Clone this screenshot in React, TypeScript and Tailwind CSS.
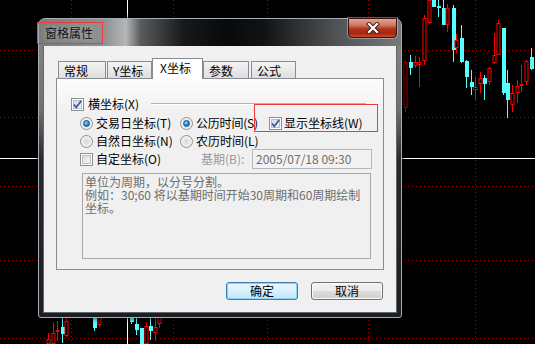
import React from "react";

type Candle = [number, number, number, number, number, "r" | "c" | "d"];

// x, wick top, wick bottom, body top, body bottom, colour
const candles: Candle[] = [
  [405, 60, 112, 62, 108, "d"],
  [410, 55, 75, 62, 68, "c"],
  [415, 56, 68, 62, 66, "r"],
  [419, 57, 87, 62, 65, "r"],
  [424, 15, 65, 18, 61, "r"],
  [429, 0, 24, 0, 23, "r"],
  [433, 0, 7, 0, 7, "c"],
  [438, 0, 17, 6, 8, "c"],
  [443, 0, 25, 8, 25, "c"],
  [447, 4, 32, 8, 25, "r"],
  [453, 5, 62, 8, 50, "c"],
  [456, 34, 53, 40, 48, "r"],
  [461, 25, 63, 38, 62, "c"],
  [466, 60, 88, 61, 77, "c"],
  [471, 70, 95, 82, 87, "c"],
  [475, 77, 100, 87, 90, "r"],
  [480, 72, 93, 78, 84, "r"],
  [484, 75, 100, 78, 84, "c"],
  [489, 67, 85, 68, 82, "r"],
  [494, 33, 64, 55, 63, "r"],
  [498, 20, 55, 23, 55, "r"],
  [503, 28, 95, 28, 93, "c"],
  [507, 70, 118, 83, 100, "c"],
  [512, 85, 112, 93, 105, "r"],
  [517, 80, 103, 86, 93, "r"],
  [521, 65, 92, 84, 85, "r"],
  [526, 60, 85, 61, 82, "r"],
  [531, 48, 70, 57, 69, "c"],
  [48, 333, 344, 339, 344, "r"],
  [53, 322, 344, 333, 344, "r"],
  [57, 321, 341, 330, 332, "r"],
  [62, 310, 343, 327, 334, "c"],
  [66, 310, 337, 321, 336, "r"],
  [94, 310, 331, 312, 328, "c"],
  [99, 310, 327, 312, 325, "r"],
  [131, 310, 324, 312, 322, "c"],
  [136, 310, 335, 324, 330, "c"],
  [141, 328, 344, 328, 344, "c"],
  [146, 322, 344, 326, 344, "r"],
  [150, 310, 340, 326, 331, "c"],
  [155, 310, 341, 327, 333, "r"],
  [159, 310, 328, 312, 324, "r"],
];

const gridY = [50, 117, 186, 260, 338];
const gridX = [71, 173, 267, 368, 475];

const Chart = () => (
  <svg className="absolute inset-0" width={535} height={344}>
    {gridY.map((y) => (
      <line key={`gy${y}`} x1={0} y1={y + 0.5} x2={535} y2={y + 0.5} stroke="#a00000" strokeDasharray="1 3" />
    ))}
    {gridX.map((x) => (
      <line key={`gx${x}`} x1={x + 0.5} y1={0} x2={x + 0.5} y2={344} stroke="#a00000" strokeDasharray="1 3" />
    ))}
    <line x1={127.5} y1={0} x2={127.5} y2={344} stroke="#ffffff" />
    <line x1={0} y1={158.5} x2={535} y2={158.5} stroke="#ffffff" />
    {candles.map(([x, wt, wb, bt, bb, c], i) => {
      const col = c === "c" ? "#55ffff" : c === "d" ? "#a00000" : "#ff0000";
      return (
        <g key={`c${i}`}>
          <line x1={x + 0.5} y1={wt} x2={x + 0.5} y2={wb} stroke={col} />
          {c === "c" ? (
            <rect x={x - 1} y={bt} width={4} height={Math.max(bb - bt, 1)} fill={col} />
          ) : (
            <rect x={x - 1} y={bt + 0.5} width={3} height={Math.max(bb - bt - 1, 1)} fill="#000" stroke={col} />
          )}
        </g>
      );
    })}
  </svg>
);

const Checkbox = ({ checked }: { checked?: boolean }) => (
  <span className="relative flex h-[13px] w-[13px] shrink-0 items-center justify-center border border-[#8e8f8f] bg-white">
    <span className="h-[9px] w-[9px] border border-[#b9bdc2] bg-linear-to-br from-[#d8dbe0] to-[#f7f7f7]" />
    {checked && (
      <svg className="absolute left-0 top-0" width={11} height={11} viewBox="0 0 11 11">
        <path d="M2 5.5 L4.3 8.3 L9.3 1.8" fill="none" stroke="#3d57a6" strokeWidth={1.8} />
      </svg>
    )}
  </span>
);

const Radio = ({ checked }: { checked?: boolean }) => (
  <span className="flex h-[13px] w-[13px] shrink-0 items-center justify-center rounded-full border border-[#8e8f8f] bg-[radial-gradient(circle_at_50%_50%,#d6d8db_0%,#eceded_55%,#ffffff_100%)]">
    {checked && (
      <span className="h-[7px] w-[7px] rounded-full border border-[#1d4f86] bg-[radial-gradient(circle_at_40%_35%,#9fe0ff_0%,#2a94e0_45%,#0d5aa6_100%)]" />
    )}
  </span>
);

const tabs = [
  { label: "常规", w: "w-[48px]", ml: "" },
  { label: "Y坐标", w: "w-[45px]", ml: "ml-[1px]" },
  { label: "X坐标", w: "w-[51px]", ml: "", active: true },
  { label: "参数", w: "w-[46px]", ml: "" },
  { label: "公式", w: "w-[45px]", ml: "ml-[2px]" },
];

const Dialog = () => (
  <div className="absolute left-[38px] top-[18px] flex h-[300px] w-[364px] flex-col rounded-t-[7px] rounded-b-[3px] border border-[#a9adb1] bg-[linear-gradient(to_bottom,#85888b_0px,#6f7275_90px,#26292d_140px,#1b1e22_100%)] shadow-[0_0_6px_rgba(0,0,0,0.8)]">
    <div className="relative flex h-[27px] shrink-0 items-center rounded-t-[6px] bg-[linear-gradient(to_right,#7a7c7e_0%,#8e9092_18%,#b4b6b8_24%,#5a5c5e_28%,#16181a_40%,#08090a_52%,#101214_62%,#505254_82%,#767879_100%)] pl-[6px]">
      <span className="text-[12px] leading-[14px] text-[#111] [text-shadow:0_0_5px_rgba(220,220,220,0.7)]">窗格属性</span>
      <div className="absolute right-[4px] top-[-1px] flex h-[20px] w-[49px] items-center justify-center rounded-b-[4px] border border-[#3b120a] bg-[linear-gradient(to_bottom,#e2a497_0%,#cf7563_35%,#b2321b_55%,#a82610_80%,#c84a2a_100%)] shadow-[0_0_0_1px_rgba(255,255,255,0.35)]">
        <svg width={14} height={12} viewBox="0 0 14 12">
          <path d="M3 2 L11 10 M11 2 L3 10" stroke="#3a1a14" strokeWidth={4} strokeLinecap="square" />
          <path d="M3 2 L11 10 M11 2 L3 10" stroke="#ffffff" strokeWidth={2.2} strokeLinecap="square" />
        </svg>
      </div>
    </div>
    <div className="mx-[5px] mb-[5px] flex flex-1 flex-col bg-[#f0f0f0] px-[12px] pt-[12px] shadow-[0_0_0_1px_#62676c]">
      <div className="flex h-[21px] items-end pl-[2px]">
        {tabs.map((t) =>
          t.active ? (
            <div
              key={t.label}
              className={`relative z-10 flex h-[21px] items-center border border-b-0 border-[#898c95] bg-white pb-[3px] pl-[7px] ${t.w} ${t.ml}`}
            >
              {t.label}
            </div>
          ) : (
            <div
              key={t.label}
              className={`flex h-[18px] items-center border border-b-0 border-[#898c95] bg-linear-to-b from-[#f4f4f4] to-[#dddddd] pl-[5px] ${t.w} ${t.ml}`}
            >
              {t.label}
            </div>
          )
        )}
      </div>
      <div className="-mt-px flex h-[192px] flex-col border border-[#898c95] bg-linear-to-b from-[#fcfcfc] to-[#f0f0f0] to-[20%] pl-[14px] pt-[16px]">
        <div className="flex h-[18px] items-center">
          <Checkbox checked />
          <span className="ml-[4px]">横坐标(X)</span>
          <span className="ml-[12px] mr-[17px] h-[2px] flex-1 border-t border-[#b4b4b4] border-b border-b-white" />
        </div>
        <div className="ml-[9px] mt-[1px] flex h-[18px] items-center">
          <div className="flex w-[100px] items-center gap-[3px]">
            <Radio checked />
            <span>交易日坐标(T)</span>
          </div>
          <div className="flex w-[89px] items-center gap-[3px]">
            <Radio checked />
            <span className="tracking-[-0.2px]">公历时间(S)</span>
          </div>
          <div className="flex items-center gap-[2px]">
            <Checkbox checked />
            <span>显示坐标线(W)</span>
          </div>
        </div>
        <div className="ml-[9px] flex h-[18px] items-center">
          <div className="flex w-[100px] items-center gap-[3px]">
            <Radio />
            <span>自然日坐标(N)</span>
          </div>
          <div className="flex items-center gap-[3px]">
            <Radio />
            <span>农历时间(L)</span>
          </div>
        </div>
        <div className="ml-[9px] flex h-[18px] items-center">
          <div className="flex w-[121px] items-center gap-[3px]">
            <Checkbox />
            <span>自定坐标(O)</span>
          </div>
          <span className="w-[51px] text-[#9a9a9a]">基期(B):</span>
          <div className="flex h-[20px] w-[120px] shrink-0 items-center border border-[#b5b8bc] bg-[#f2f2f2] pl-[3px] text-[#6d6d6d]">
            2005/07/18 09:30
          </div>
        </div>
        <div className="ml-[11px] mt-[5px] h-[86px] w-[289px] whitespace-nowrap border border-[#a8a8a8] bg-[#f0f0f0] pl-[2px] pt-[1px] leading-[13px] text-[#6d6d6d]">
          <div>单位为周期，以分号分割。</div>
          <div>例如：30;60 将以基期时间开始30周期和60周期绘制</div>
          <div>坐标。</div>
        </div>
      </div>
      <div className="mt-[12px] flex justify-end gap-[13px] pr-[1px]">
        <button className="flex h-[18px] w-[72px] items-center justify-center rounded-[3px] border border-[#3c7fb1] bg-linear-to-b from-[#eaf6fd] via-[#d9f0fc] to-[#bee6fd] shadow-[inset_0_0_0_1px_#8fd0f5]">
          确定
        </button>
        <button className="flex h-[18px] w-[72px] items-center justify-center rounded-[3px] border border-[#707070] bg-[linear-gradient(to_bottom,#f2f2f2_0%,#ebebeb_50%,#dddddd_51%,#cfcfcf_100%)] shadow-[inset_0_0_0_1px_#fcfcfc]">
          取消
        </button>
      </div>
    </div>
  </div>
);

export default function App() {
  return (
    <div className="relative h-[344px] w-[535px] overflow-hidden bg-black font-['Noto_Sans_CJK_SC',sans-serif] text-[12px] leading-[14px] text-black">
      <Chart />
      <Dialog />
      <div className="absolute left-[37px] top-[22px] h-[22px] w-[66px] border border-[#ee3a3a]" />
      <div className="absolute left-[254px] top-[104px] h-[28px] w-[124px] border border-[#ee3a3a]" />
    </div>
  );
}
